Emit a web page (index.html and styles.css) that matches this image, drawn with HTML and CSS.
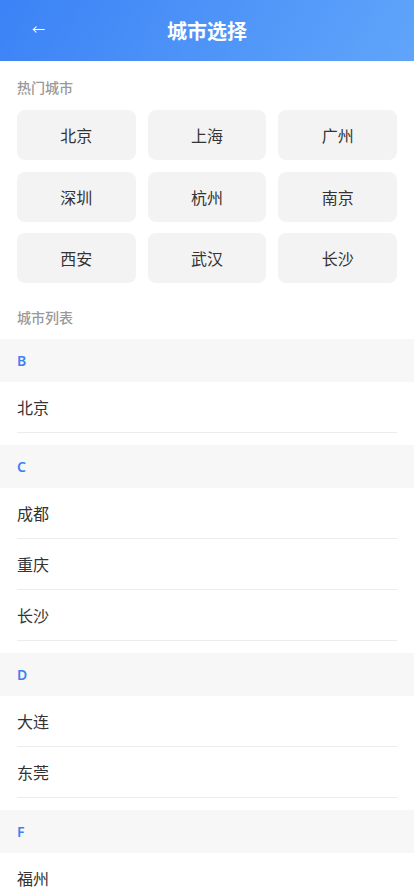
FILE: index.html
```html
<!DOCTYPE html>
<html lang="zh-CN">

<head>
    <meta charset="UTF-8">
    <title>城市选择</title>
    <link rel="stylesheet" href="styles.css">
</head>

<body>
    <div class="header">
        <a href="#" class="back">←</a>
        <h1>城市选择</h1>
    </div>

    <div class="hot">
        <div class="label">热门城市</div>
        <div class="hot-grid">
            <a href="#" class="hot-item">北京</a>
            <a href="#" class="hot-item">上海</a>
            <a href="#" class="hot-item">广州</a>
            <a href="#" class="hot-item">深圳</a>
            <a href="#" class="hot-item">杭州</a>
            <a href="#" class="hot-item">南京</a>
            <a href="#" class="hot-item">西安</a>
            <a href="#" class="hot-item">武汉</a>
            <a href="#" class="hot-item">长沙</a>
        </div>
    </div>

    <div class="list-label">城市列表</div>

    <div class="group">
        <div class="letter">B</div>
        <div class="city">北京</div>
    </div>

    <div class="group">
        <div class="letter">C</div>
        <div class="city">成都</div>
        <div class="city">重庆</div>
        <div class="city">长沙</div>
    </div>

    <div class="group">
        <div class="letter">D</div>
        <div class="city">大连</div>
        <div class="city">东莞</div>
    </div>

    <div class="group">
        <div class="letter">F</div>
        <div class="city">福州</div>
    </div>
</body>

</html>
```

FILE: styles.css
```css
body {
    margin: 0;
    font-family: "Noto Sans", "Noto Sans CJK SC", sans-serif;
    background-color: #fff;
    color: #333;
}

.header {
    height: 61px;
    display: flex;
    align-items: center;
    justify-content: center;
    position: relative;
    background: linear-gradient(120deg, #3b82f6, #60a5fa);
    color: white;
}

.header h1 {
    margin: 0;
    font-size: 20px;
    font-weight: bold;
}

.back {
    position: absolute;
    left: 32px;
    top: 20px;
    color: white;
    text-decoration: none;
    font-size: 13px;
    line-height: 18px;
}

.hot {
    padding: 17px 17px 0;
}

.label,
.list-label {
    font-size: 14px;
    line-height: 20px;
    font-weight: 500;
    color: #999;
}

.hot-grid {
    margin-top: 12px;
    display: grid;
    grid-template-columns: repeat(3, 1fr);
    column-gap: 12px;
    row-gap: 11.5px;
}

.hot-item {
    height: 50px;
    display: flex;
    align-items: center;
    justify-content: center;
    background-color: #f3f3f3;
    border-radius: 8px;
    color: #333;
    text-decoration: none;
    font-size: 16px;
}

.list-label {
    padding: 25px 17px 11px;
}

.group {
    margin-bottom: 12px;
}

.letter {
    height: 43px;
    display: flex;
    align-items: center;
    padding: 0 17px;
    background-color: #f7f7f7;
    color: #3b82f6;
    font-size: 14px;
    font-weight: 600;
}

.city {
    height: 50px;
    display: flex;
    align-items: center;
    margin: 0 17px;
    border-bottom: 1px solid #ececec;
    font-size: 16px;
    color: #333;
}
```
